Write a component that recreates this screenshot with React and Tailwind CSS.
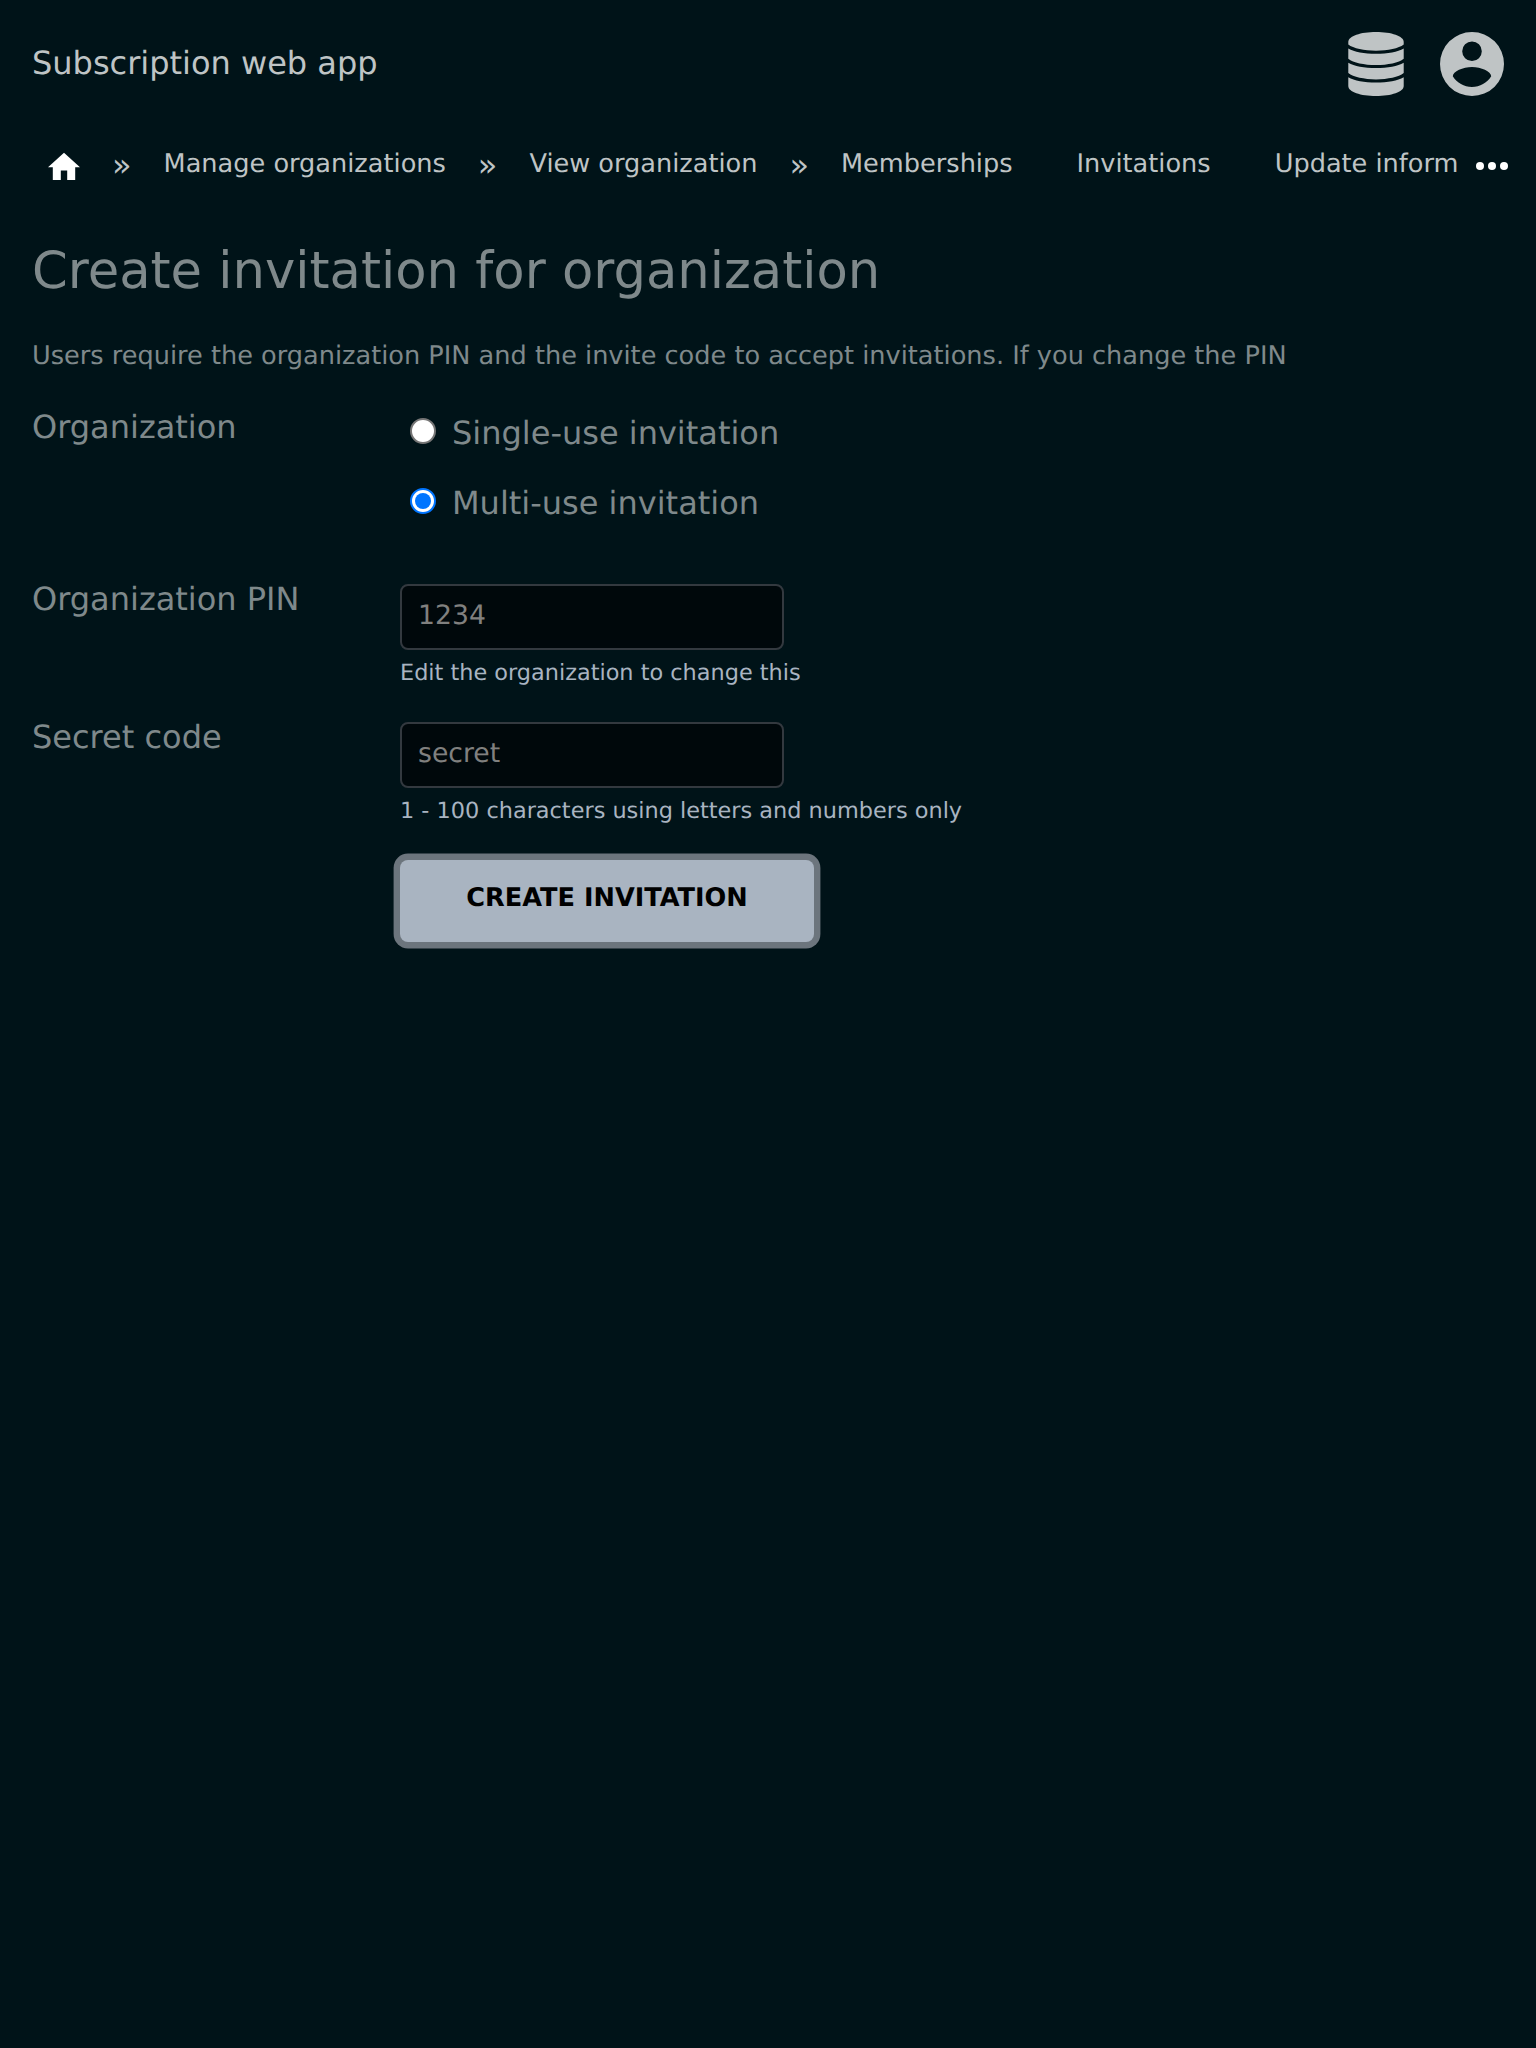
const NavLink = ({ children }) => (
  <a className="shrink-0 px-8 leading-[32px] whitespace-nowrap">{children}</a>
);

const Chevron = () => <span className="shrink-0 text-[32px] leading-[34px]">»</span>;

function HomeIcon() {
  return (
    <svg viewBox="2 0 20 24" className="h-[38.4px] w-8 shrink-0" fill="#fff">
      <path d="M10 20v-6h4v6h5v-8h3L12 3 2 12h3v8z" />
    </svg>
  );
}

function DatabaseIcon() {
  return (
    <svg viewBox="-0.3 0 56.6 64" className="h-16 w-14" preserveAspectRatio="none" fill="#bfc4c5">
      <path d="M0 10C0 4 12.5 0 28 0s28 4 28 10v2.6C51 16.5 40 18.8 28 18.8S5 16.500 0 12.600z" />
      <path d="M0 16.400c6 3.500 16 5.300 28 5.300s22-1.800 28-5.300v10.300c-5 4-16 6.300-28 6.300S5 30.700 0 26.700z" />
      <path d="M0 30.800c6 3.500 16 5.300 28 5.300s22-1.800 28-5.300v10.300c-5 4-16 6.300-28 6.300S5 45.100 0 41.100z" />
      <path d="M0 45.300c6 3.500 16 5.300 28 5.300s22-1.800 28-5.300V54c0 6-12.500 10-28 10S0 60 0 54z" />
    </svg>
  );
}

function AccountIcon() {
  return (
    <svg viewBox="0 0 64 64" className="h-16 w-16" fill="#bfc4c5">
      <path fillRule="evenodd" d="M32 0a32 32 0 1 0 0 64 32 32 0 0 0 0-64zm0 9.400a9.800 9.800 0 1 1 0 19.600 9.800 9.800 0 0 1 0-19.600zM32 35c9 0 19.200 4.500 19.200 9.300C47 51 40 55 32 55s-15-4-19.200-10.700C12.800 39.500 23 35 32 35z" />
    </svg>
  );
}

function Radio({ label, checked }) {
  return (
    <label className="flex h-[70px] items-start">
      <span
        className={
          checked
            ? "mt-[5px] flex size-[26px] items-center justify-center rounded-full border-2 border-[#0075ff] bg-white"
            : "mt-[5px] flex size-[26px] items-center justify-center rounded-full border-2 border-[#767676] bg-white"
        }
      >
        {checked && <span className="size-4 rounded-full bg-[#0075ff]" />}
      </span>
      <span className="ml-4 leading-[40px]">{label}</span>
    </label>
  );
}

function Field({ label, value, help }) {
  return (
    <div className="flex h-[138px]">
      <div className="-mt-1 w-[368px] leading-[38px]">{label}</div>
      <div>
        <input
          readOnly
          defaultValue={value}
          className="block h-[66px] w-96 rounded-lg border-2 border-[#33393f] bg-[#00080b] pt-0 pr-4 pb-1 pl-4 text-[26.67px] text-[#80807f] outline-none [text-rendering:geometricPrecision]"
        />
        <div className="mt-2 text-[22.4px] leading-[30px] text-[#a9b4c1]">{help}</div>
      </div>
    </div>
  );
}

export default function App() {
  return (
    <div className="min-h-[2048px] w-[1536px] overflow-hidden bg-[#001318] font-['DejaVu_Sans',sans-serif] text-[32px] text-[#7f898b] [text-rendering:geometricPrecision]">
      <header className="flex h-32 items-center justify-between px-8 text-[#bfc4c5]">
        <div className="-mt-[2px] leading-[38px]">Subscription web app</div>
        <div className="flex gap-9">
          <DatabaseIcon />
          <AccountIcon />
        </div>
      </header>
      <nav className="flex h-[100px] items-start pt-5 pr-7 pl-12 text-[25.6px] text-[#bfc4c5]">
        <div className="flex min-w-0 flex-1">
          <HomeIcon />
          <span className="w-8 shrink-0" />
          <Chevron />
          <NavLink>Manage organizations</NavLink>
          <Chevron />
          <NavLink>View organization</NavLink>
          <Chevron />
          <NavLink>Memberships</NavLink>
          <NavLink>Invitations</NavLink>
          <NavLink>Update inform</NavLink>
        </div>
        <svg viewBox="0 0 32 8" className="mt-[14px] h-2 w-8 shrink-0" fill="#fff">
          <circle cx="4" cy="4" r="4" />
          <circle cx="16" cy="4" r="4" />
          <circle cx="28" cy="4" r="4" />
        </svg>
      </nav>
      <main className="px-8">
        <h1 className="pt-[13px] text-[51.2px] leading-[60px]">Create invitation for organization</h1>
        <p className="mt-10 text-[25.6px] leading-[30px]">
          Users require the organization PIN and the invite code to accept invitations. If you change the PIN
        </p>
        <div className="mt-[42px] flex h-[171px]">
          <div className="-mt-[5px] w-[378px] leading-[38px]">Organization</div>
          <div>
            <Radio label="Single-use invitation" />
            <Radio label="Multi-use invitation" checked />
          </div>
        </div>
        <Field label="Organization PIN" value="1234" help="Edit the organization to change this" />
        <Field label="Secret code" value="secret" help="1 - 100 characters using letters and numbers only" />
        <button className="ml-[368px] block h-[82px] w-[414px] rounded-lg bg-[#a9b4c1] pb-1.5 text-[25.6px] font-bold text-black ring-[6.4px] ring-[#6c757d] [text-rendering:geometricPrecision]">
          CREATE INVITATION
        </button>
      </main>
    </div>
  );
}
